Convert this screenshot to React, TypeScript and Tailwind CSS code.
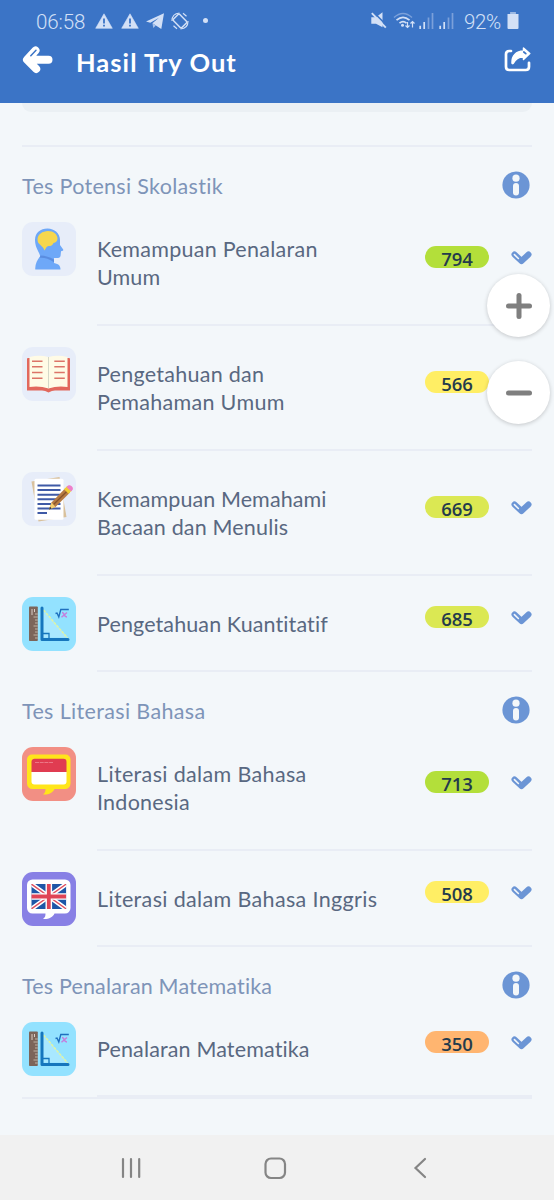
import type { ReactNode } from "react"

type Line = { text: string; spacing: string }

type Item = {
  title: Line[]
  score: number
  scoreColor: string
  icon: ReactNode
}

type Section = {
  name: string
  spacing: string
  items: Item[]
}

function HeadIcon() {
  return (
    <svg viewBox="0 0 54 54" className="h-[54px] w-[54px]">
      <rect width="54" height="54" rx="11" fill="#e7edf9" />
      <path
        d="M18 34.500c.5-3-5-8-5-16.500C13 10.500 18.500 6.500 25.500 6.500S38 11.500 38 18v5l3.200 4.500c.3 1-.3 1.500-2.200 1.700l-.4 4.300c-.2 1.500-1 2.500-2.600 2.500H32v5c5 1 6.500 3 6.500 6.500H13.300c-.5-5 2-9.500 4.700-13Z"
        fill="#6ea8f8"
      />
      <path d="M18.500 33.500c5 .2 9 1.500 13.500 4v2.800c-5-3.500-9-4.800-14.300-4.600Z" fill="#5a8de0" />
      <path
        d="M26 9c5.500 0 9.500 3.500 9.500 7.500 0 2.500-1.500 4-4 4.500-1 2.500-2.500 3-5 3-2 0-2.500 2.500-4.200 4.500-.7-3-2.300-3.800-3.800-5.500C16.500 21.500 15.500 20 15.500 17.500 15.500 12.500 20.500 9 26 9Z"
        fill="#f6d74e"
      />
    </svg>
  )
}

function BookIcon() {
  return (
    <svg viewBox="0 0 54 54" className="h-[54px] w-[54px]">
      <rect width="54" height="54" rx="11" fill="#e7edf9" />
      <path d="M5 12q0-1 1-1h41q1 0 1 1v31.500H33q-3 0-6.500 2-3.500-2-6.500-2H5Z" fill="#e2685d" />
      <path d="M7.500 10q10-2.500 19 0 9-2.500 19 0v30q-10-1.500-19 1.500-9-3-19-1.500Z" fill="#fffbe6" />
      <path d="M26.500 10v31" stroke="#d5d8c8" strokeWidth="1" />
      <path
        d="M10 14.200h10.500M10 19.800h10.500M10 25.500h10.500M10 31.200h10.500M32.300 14.200h10.500M32.300 19.800h10.500M32.300 25.500h10.500M32.300 31.200h10.500"
        stroke="#dc7468"
        strokeWidth="1.600"
      />
    </svg>
  )
}

function WritingIcon() {
  return (
    <svg viewBox="0 0 54 54" className="h-[54px] w-[54px]">
      <rect width="54" height="54" rx="11" fill="#e7edf9" />
      <path d="m9.500 9.500 28-4.500 7 40-28 4.500Z" fill="#d9c19c" />
      <rect x="12.500" y="6.800" width="29" height="41" rx="1.500" fill="#fff" />
      <path
        d="M15.500 13.500h23M15.500 18h23M15.500 22.800h23M15.500 27.300h23M15.500 31.900h23M15.500 36.500h23M15.500 41h9.500"
        stroke="#3f5aa6"
        strokeWidth="2"
      />
      <path d="m27 37.500 2.500-7L43.500 16l4.500 4.500L33.500 35Z" fill="#b77b42" />
      <path d="M31.500 32.500 46 18.300" stroke="#855329" strokeWidth="1.300" />
      <path d="m27 37.500 2.500-7L33.500 35Z" fill="#f4cf70" />
      <path d="m27 37.500 1-2.700 1.700 1.600Z" fill="#26313f" />
      <path d="m42 17.300 3.500-3.500 4.500 4.500-3.400 3.500Z" fill="#f2ce36" />
      <path d="m44.500 15 1.700-1.500c2.500-1 5.500 2 4.500 4l-1.500 2Z" fill="#ee7fca" />
    </svg>
  )
}

function MathIcon() {
  return (
    <svg viewBox="0 0 54 54" className="h-[54px] w-[54px]">
      <rect width="54" height="54" rx="11" fill="#93e2ff" />
      <rect x="7" y="9.500" width="8.800" height="34.500" rx=".8" fill="#7c655a" />
      <path d="M10 12v6M12.500 12v3" stroke="#d9cec6" strokeWidth="1" />
      <path
        d="M13 17h2.800M11.500 20h4.300M13 23h2.800M13 26h2.800M11.500 29h4.300M13 32h2.800M13 35h2.800M11.500 38h4.300M13 41h2.800"
        stroke="#c8bcae"
        strokeWidth=".9"
      />
      <path d="M21 12.500v28h25Z" fill="#a9e8ff" />
      <path d="m21.500 13 24 28" stroke="#dff4a4" strokeWidth="1.500" strokeDasharray="3 1" />
      <path d="M20 11v31.500h26" fill="none" stroke="#1676bd" strokeWidth="3" strokeLinecap="round" strokeLinejoin="round" />
      <path d="M21 36.500h6v5" fill="none" stroke="#1676bd" strokeWidth="1.300" />
      <path d="m33.500 16.500 1.500-.5 1.800 4 2-7.500h8" fill="none" stroke="#1f70bf" strokeWidth="1.400" />
      <path d="M40 15.500q1.500 0 2.200 2.300.8 2.200 2.800 2.200M45 15.500l-5.500 4.800" fill="none" stroke="#c47fdd" strokeWidth="1.500" />
    </svg>
  )
}

function IndonesiaIcon() {
  return (
    <svg viewBox="0 0 54 54" className="h-[54px] w-[54px]">
      <rect width="54" height="54" rx="11" fill="#f28f84" />
      <path
        d="M10 7.500h33.500a5 5 0 0 1 5 5v24a5.500 5.500 0 0 1-5.500 5.500H32.500c-1.500 3.500-6 6-11.500 5.500 2-1.500 2.500-3 2.500-5.500H10.500A5.500 5.500 0 0 1 5 36.500v-24a5 5 0 0 1 5-5Z"
        fill="#ffe51a"
      />
      <path d="M13 11.800h28.500a3 3 0 0 1 3 3V25H9.500V15a3 3 0 0 1 3.500-3.200Z" fill="#e03c51" />
      <path d="M9.500 25h35v9.500a3 3 0 0 1-3 3h-29a3 3 0 0 1-3-3Z" fill="#fff" />
      <path d="M13 15.500h18" stroke="#f08794" strokeWidth=".8" strokeDasharray="4 .7" />
    </svg>
  )
}

function EnglishIcon() {
  return (
    <svg viewBox="0 0 54 54" className="h-[54px] w-[54px]">
      <rect width="54" height="54" rx="11" fill="#8880e5" />
      <path
        d="M10.500 7.500h32.500a5.500 5.500 0 0 1 5.500 5.500v23a5.500 5.500 0 0 1-5.500 5.500H32.500c-1.500 3.500-6 6-11.500 5.500 2-1.500 2.500-3 2.500-5.500h-13A5.500 5.500 0 0 1 5 36V13a5.500 5.500 0 0 1 5.500-5.500Z"
        fill="#fff"
      />
      <svg x="9.300" y="12" width="35" height="25" viewBox="0 0 35 25">
        <path d="M0 0h35v25H0Z" fill="#1e56a7" />
        <path d="m0 0 35 25M35 0 0 25" stroke="#fff" strokeWidth="4.500" />
        <path d="m0 0 35 25M35 0 0 25" stroke="#df5060" strokeWidth="1.400" />
        <path d="M17.500 0v25M0 12.500h35" stroke="#fff" strokeWidth="6.600" />
        <path d="M17.500 0v25M0 12.500h35" stroke="#df4456" strokeWidth="3.800" />
      </svg>
    </svg>
  )
}

const sections: Section[] = [
  {
    name: "Tes Potensi Skolastik",
    spacing: "tracking-[0.31px]",
    items: [
      {
        title: [
          { text: "Kemampuan Penalaran", spacing: "tracking-[0.27px]" },
          { text: "Umum", spacing: "tracking-[0.1px]" },
        ],
        score: 794,
        scoreColor: "bg-[#b3df3a]",
        icon: <HeadIcon />,
      },
      {
        title: [
          { text: "Pengetahuan dan", spacing: "tracking-[0.27px]" },
          { text: "Pemahaman Umum", spacing: "tracking-[0.3px]" },
        ],
        score: 566,
        scoreColor: "bg-[#ffee64]",
        icon: <BookIcon />,
      },
      {
        title: [
          { text: "Kemampuan Memahami", spacing: "tracking-[0.09px]" },
          { text: "Bacaan dan Menulis", spacing: "tracking-[0.16px]" },
        ],
        score: 669,
        scoreColor: "bg-[#dbe853]",
        icon: <WritingIcon />,
      },
      {
        title: [{ text: "Pengetahuan Kuantitatif", spacing: "tracking-[0.11px]" }],
        score: 685,
        scoreColor: "bg-[#dbe853]",
        icon: <MathIcon />,
      },
    ],
  },
  {
    name: "Tes Literasi Bahasa",
    spacing: "tracking-[0.35px]",
    items: [
      {
        title: [
          { text: "Literasi dalam Bahasa", spacing: "tracking-[0.35px]" },
          { text: "Indonesia", spacing: "tracking-[0.25px]" },
        ],
        score: 713,
        scoreColor: "bg-[#b3df3a]",
        icon: <IndonesiaIcon />,
      },
      {
        title: [{ text: "Literasi dalam Bahasa Inggris", spacing: "tracking-[0.35px]" }],
        score: 508,
        scoreColor: "bg-[#ffee64]",
        icon: <EnglishIcon />,
      },
    ],
  },
  {
    name: "Tes Penalaran Matematika",
    spacing: "tracking-[0.17px]",
    items: [
      {
        title: [{ text: "Penalaran Matematika", spacing: "tracking-[0.14px]" }],
        score: 350,
        scoreColor: "bg-[#ffb570]",
        icon: <MathIcon />,
      },
    ],
  },
]

function Warning() {
  return (
    <svg viewBox="0 0 18 16" className="h-4 w-[18px]">
      <path d="M9 .8 17.300 15.300H.7Z" fill="#d3e0f6" stroke="#d3e0f6" strokeWidth=".6" strokeLinejoin="round" />
      <path d="M9 5.500v5M9 11.800v1.800" stroke="#3b74c6" strokeWidth="1.800" />
    </svg>
  )
}

function Signal() {
  return (
    <svg viewBox="0 0 15 16" className="h-4 w-[15px]" strokeWidth="1.700">
      <path d="M1.200 12.700V16M5.200 9v7" stroke="#d3e0f6" />
      <path d="M9.500 4.500V16M13.500 0v16" stroke="#7ba0da" />
    </svg>
  )
}

function StatusBar() {
  return (
    <div className="flex h-[41px] items-center pl-9 pr-[35px] font-[Roboto,sans-serif] text-[20.500px] text-[#d3e0f6]">
      <span className="mt-[3px] w-[59px] font-light tracking-[-0.100px]">06:58</span>
      <div className="flex items-center gap-2">
        <Warning />
        <Warning />
        <svg viewBox="0 0 18 16" className="mt-px -ml-px h-4 w-[18px]">
          <path d="M0 8.500 18 .3 15.300 16 6.400 10.300 13 4.800 4.300 9.800Z" fill="#d3e0f6" />
          <path d="M6.400 10.300 9.800 12.500 7.300 15Z" fill="#a9c2ea" />
        </svg>
        <svg viewBox="0 0 18 18" className="-ml-px h-[18px] w-[18px]" fill="none" stroke="#d3e0f6">
          <rect x="4.600" y="3.100" width="8.800" height="11.800" rx="1.200" strokeWidth="1.500" transform="rotate(-45 9 9)" />
          <path d="M1 9C1 4 4 1.300 8.500 1M17 9c0 5-3 7.700-7.500 8M12 1.300l3.500 3M6 16.700l-3.500-3" strokeWidth="1.200" />
        </svg>
        <span className="ml-1.5 h-[5px] w-[5px] rounded-full bg-[#d3e0f6]" />
      </div>
      <svg viewBox="0 0 16 17" className="ml-auto h-[17px] w-4">
        <path d="M.3 5.300H5L11.500.3v15L5 11.700H.3Z" fill="#d3e0f6" />
        <path d="m1.500-.8 15 15" stroke="#3b74c6" strokeWidth="1.600" />
        <path d="m.8 1.200 14 14.500" stroke="#d3e0f6" strokeWidth="1.900" />
      </svg>
      <svg viewBox="0 0 22 17" className="ml-[6px] h-[17px] w-[22px]" fill="none">
        <path d="M1 5.500Q10 -2.500 19 5.500" stroke="#7ba0da" strokeWidth="1.500" />
        <path d="M3.500 8.200q6.500-5.500 13 0M6.500 11.200q3.500-3 7 0" stroke="#d3e0f6" strokeWidth="1.700" />
        <circle cx="9.500" cy="13.200" r="1.500" fill="#d3e0f6" />
        <path d="M14.500 10v5.500m-2-2 2 2 2-2M19.500 15.500v-6m-2 2 2-2 2 2" stroke="#d3e0f6" strokeWidth="1.200" />
      </svg>
      <div className="ml-[4px] flex gap-[5px]">
        <Signal />
        <Signal />
      </div>
      <span className="mt-[3px] ml-[10px] w-[43px] font-light tracking-[-0.400px]">92%</span>
      <svg viewBox="0 0 12 17" className="h-[17px] w-3">
        <path d="M3.500 0h5v2h3v14q0 1-1 1h-9q-1 0-1-1V2h3Z" fill="#d3e0f6" />
        <path d="M3.500 0h5v2h-5Z" fill="#9bb8e3" />
      </svg>
    </div>
  )
}

function Header() {
  return (
    <header className="h-[103px] bg-[#3b74c6]">
      <StatusBar />
      <div className="flex h-[43px] items-center pr-[23px] pl-[22px]">
        <svg viewBox="0 0 32 30" className="-mt-1.5 h-[30px] w-8" fill="none" strokeLinecap="round" strokeLinejoin="round">
          <path d="M13.500 5.500 5 14.700l9.200 9.200M8 14.700H26.500" stroke="#fff" strokeWidth="8" />
          <path d="m5 14.700 9.200-6v15Z" fill="#fff" />
          <path d="m8.800 10.700 5.200-5.400" stroke="#3b74c6" strokeWidth="1.500" />
        </svg>
        <h1 className="ml-[22px] text-[25.500px] font-bold tracking-[1.050px] text-white">Hasil Try Out</h1>
        <svg viewBox="0 0 28 27" className="-mt-1.5 ml-auto h-[27px] w-7" fill="none">
          <path d="M8 5H6.200Q3 5 3 8.200v12.600Q3 24 6.200 24h16.600q3.200 0 3.200-3.200v-4" stroke="#fff" strokeWidth="2.700" strokeLinecap="round" />
          <path
            d="M20.500 2 26.800 7.500 20.500 13.500V11c-5-.2-8 1.700-10 6-.5 1-1.500.8-1.500-.3C8.700 10 13 5.200 20.500 5Z"
            fill="#fff"
            stroke="#fff"
            strokeWidth="1.500"
            strokeLinejoin="round"
          />
          <path d="m20.800 6 2 1.700" stroke="#3b74c6" strokeWidth="1.700" strokeLinecap="round" />
        </svg>
      </div>
    </header>
  )
}

function InfoIcon() {
  return (
    <svg viewBox="0 0 28 28" className="-mt-0.5 h-7 w-7">
      <circle cx="14" cy="14" r="13.600" fill="#6b95d5" />
      <circle cx="14" cy="7.200" r="3.600" fill="#f3f7fa" />
      <rect x="11" y="12" width="6" height="12.500" rx="3" fill="#f3f7fa" />
    </svg>
  )
}

function ChevronIcon() {
  return (
    <svg viewBox="0 0 21 14" className="h-3.5 w-[21px]" fill="none" strokeLinecap="round" strokeLinejoin="round">
      <path d="m3.500 3.500 7 6.500 7-6.500" stroke="#6b95d5" strokeWidth="6" />
      <path d="m3.400 3.600 4 3.900" stroke="#f3f7fa" strokeWidth="1.600" />
    </svg>
  )
}

function ResultRow({ item }: { item: Item }) {
  const single = item.title.length === 1
  return (
    <div className={single ? "flex h-24 px-[22px]" : "flex h-[125px] px-[22px]"}>
      <div className="w-[75px] shrink-0 pt-[22px]">{item.icon}</div>
      <div className="-mb-px flex flex-1 border-b-2 border-[#e9edf5]">
        <div className="w-[328px] shrink-0 pt-[35px] text-[21.500px] leading-[28px] text-[#596881]">
          {item.title.map((line) => (
            <p key={line.text} className={`whitespace-nowrap ${line.spacing}`}>{line.text}</p>
          ))}
        </div>
        <div className={single ? "flex flex-1 items-start justify-between pt-[31px]" : "flex flex-1 items-start justify-between pt-[46px]"}>
          <span className={`h-[22px] w-16 rounded-full text-center font-['Open_Sans',sans-serif] text-[18.500px] font-semibold leading-[25px] text-[#243b4c] ${item.scoreColor}`}>
            {item.score}
          </span>
          <div className="pt-[5px]">
            <ChevronIcon />
          </div>
        </div>
      </div>
    </div>
  )
}

function ZoomButton({ plus }: { plus?: boolean }) {
  return (
    <button className="flex h-[63px] w-[63px] items-center justify-center rounded-full bg-white shadow-[0_1px_4px_rgba(0,0,0,0.2)]">
      <svg viewBox="0 0 28 28" className="h-7 w-7" stroke="#7f7f7f" strokeWidth="5" strokeLinecap="round">
        <path d="M3.500 14h21" />
        {plus && <path d="M14 3.500v21" />}
      </svg>
    </button>
  )
}

function NavigationBar() {
  return (
    <nav className="flex h-[65px] items-center bg-[#f1f1f1] pl-[120px]">
      <svg viewBox="0 0 22 22" className="h-[22px] w-[22px]" stroke="#858585" strokeWidth="2.200" strokeLinecap="round">
        <path d="M3 2v18M11 2v18M19.200 2v18" />
      </svg>
      <svg viewBox="0 0 24 24" className="ml-[121px] h-6 w-6" fill="none" stroke="#858585" strokeWidth="2.200">
        <rect x="2.500" y="2.500" width="19.500" height="19.500" rx="5.500" />
      </svg>
      <svg viewBox="0 0 14 22" className="ml-[126px] h-[22px] w-3.5" fill="none" stroke="#858585" strokeWidth="2.200" strokeLinecap="round">
        <path d="m12 2-9.500 9 9.500 9" />
      </svg>
    </nav>
  )
}

export default function App() {
  return (
    <div className="relative flex h-[1200px] w-[554px] flex-col overflow-hidden bg-[#f3f7fa] font-[Lato,sans-serif]">
      <Header />

      {/* Bottom edge of the card scrolled under the header */}
      <div className="mx-[22px] h-[9px] rounded-b-[20px] bg-[#ebf0f4]" />

      <main className="flex-1 pt-[33px]">
        <div className="mx-[22px] -mb-px h-0.5 bg-[#e9edf5]" />
        {sections.map((section) => (
          <section key={section.name}>
            <div className="flex h-[54px] items-center justify-between pt-[25px] pr-6 pl-[22px]">
              <h2 className={`text-[21.500px] leading-[28px] text-[#7e94b8] ${section.spacing}`}>{section.name}</h2>
              <InfoIcon />
            </div>
            {section.items.map((item) => (
              <ResultRow key={item.score} item={item} />
            ))}
          </section>
        ))}
        <div className="mx-[22px] mt-px h-0.5 bg-[#e9edf5]" />
      </main>

      <NavigationBar />

      {/* Floating zoom controls */}
      <div className="absolute top-[274px] right-[4px] flex flex-col gap-6">
        <ZoomButton plus />
        <ZoomButton />
      </div>
    </div>
  )
}
